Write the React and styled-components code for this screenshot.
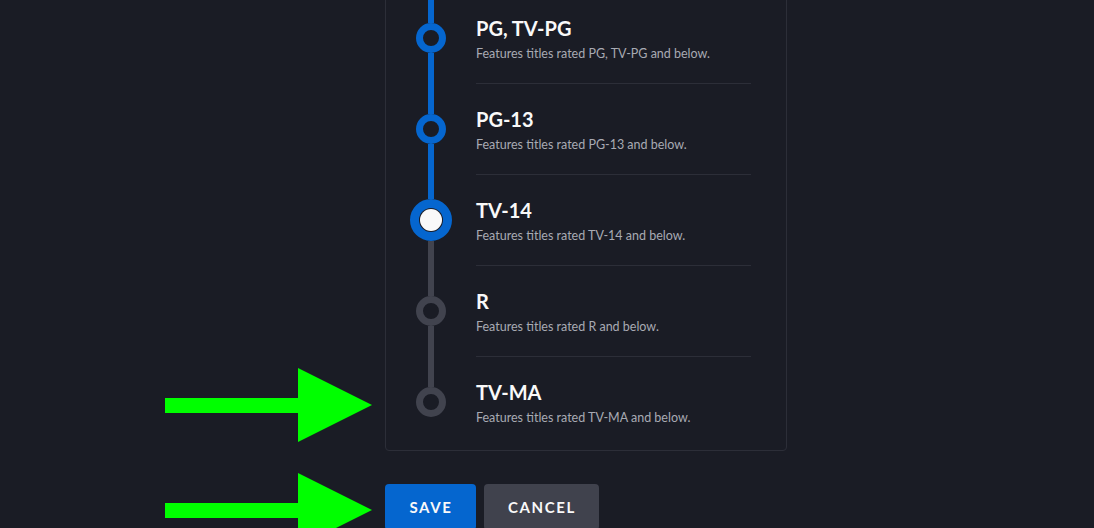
import React from "react"
import styled, { createGlobalStyle } from "styled-components"

const GlobalStyle = createGlobalStyle`
  html, body {
    margin: 0;
    padding: 0;
    background: #1a1c25;
  }
  body {
    font-family: Lato, "Noto Sans", sans-serif;
    color: #f9f9f9;
  }
`

const ratings = ["PG, TV-PG", "PG-13", "TV-14", "R", "TV-MA"]

const SELECTED = 2
const BLUE = "#0566cf"
const GREY = "#41434e"

export default function App() {
  return (
    <Page>
      <GlobalStyle />
      <Column>
        <Card>
          {ratings.map((code, i) => (
            <Row key={code}>
              <Track>
                <Segment
                  $active={i <= SELECTED}
                  $height={i === SELECTED ? 25 : 31}
                />
                {i === SELECTED ? (
                  <SelectedDot>
                    <DotCore />
                  </SelectedDot>
                ) : (
                  <Dot $active={i < SELECTED} />
                )}
                <Segment
                  $grow
                  $hidden={i === ratings.length - 1}
                  $active={i < SELECTED}
                />
              </Track>
              <Content>
                <Title>{code}</Title>
                <Description>Features titles rated {code} and below.</Description>
              </Content>
            </Row>
          ))}
        </Card>
        <Actions>
          <Button $primary>SAVE</Button>
          <Button>CANCEL</Button>
        </Actions>
      </Column>
      <Arrow $top={368} />
      <Arrow $top={473} />
    </Page>
  )
}

const Arrow = ({ $top }) => (
  <ArrowSvg style={{ top: $top }} width="207" height="74" viewBox="0 0 207 74">
    <polygon
      points="0,30 133,30 133,0 207,37 133,74 133,45 0,45"
      fill="#00ff00"
    />
  </ArrowSvg>
)

const Page = styled.div`
  position: relative;
  width: 1094px;
  height: 528px;
  overflow: hidden;
`

const Column = styled.div`
  width: 402px;
  margin-left: 385px;
  margin-top: -9px;
`

const Card = styled.div`
  border: 1px solid #2c2e38;
  border-radius: 4px;
  padding-bottom: 3px;
`

const Row = styled.div`
  display: grid;
  grid-template-columns: 90px 1fr;
  padding-right: 35px;
`

const Track = styled.div`
  display: flex;
  flex-direction: column;
  align-items: center;
  height: 91px;
`

const Segment = styled.div`
  width: 6px;
  flex: ${p => (p.$grow ? "1 1 auto" : `0 0 ${p.$height}px`)};
  background: ${p => (p.$hidden ? "transparent" : p.$active ? BLUE : GREY)};
`

const Dot = styled.div`
  flex: 0 0 auto;
  width: 16px;
  height: 16px;
  border: 7px solid ${p => (p.$active ? BLUE : GREY)};
  border-radius: 50%;
  background: #1a1c25;
`

const SelectedDot = styled.div`
  flex: 0 0 auto;
  width: 24px;
  height: 24px;
  border: 9px solid ${BLUE};
  border-radius: 50%;
  background: #1a1c25;
  display: flex;
  align-items: center;
  justify-content: center;
`

const DotCore = styled.div`
  width: 22px;
  height: 22px;
  border-radius: 50%;
  background: #f9f9f9;
`

const Content = styled.div`
  border-top: 1px solid #2c2e38;
  padding-top: 23px;
`

const Title = styled.div`
  font-size: 20px;
  line-height: 24px;
  font-weight: 700;
  color: #f9f9f9;
`

const Description = styled.div`
  margin-top: 6px;
  font-size: 12.5px;
  line-height: 16px;
  color: #a8aab3;
`

const Actions = styled.div`
  display: flex;
  gap: 8px;
  margin-top: 33px;
`

const Button = styled.button`
  height: 46px;
  padding: 0 23px 0 24.5px;
  border: none;
  border-radius: 4px;
  font-family: Lato, "Noto Sans", sans-serif;
  font-size: 15px;
  font-weight: 700;
  letter-spacing: 1.6px;
  color: #f9f9f9;
  background: ${p => (p.$primary ? BLUE : "#40424d")};
  cursor: pointer;
`

const ArrowSvg = styled.svg`
  position: absolute;
  left: 165px;
  display: block;
`
